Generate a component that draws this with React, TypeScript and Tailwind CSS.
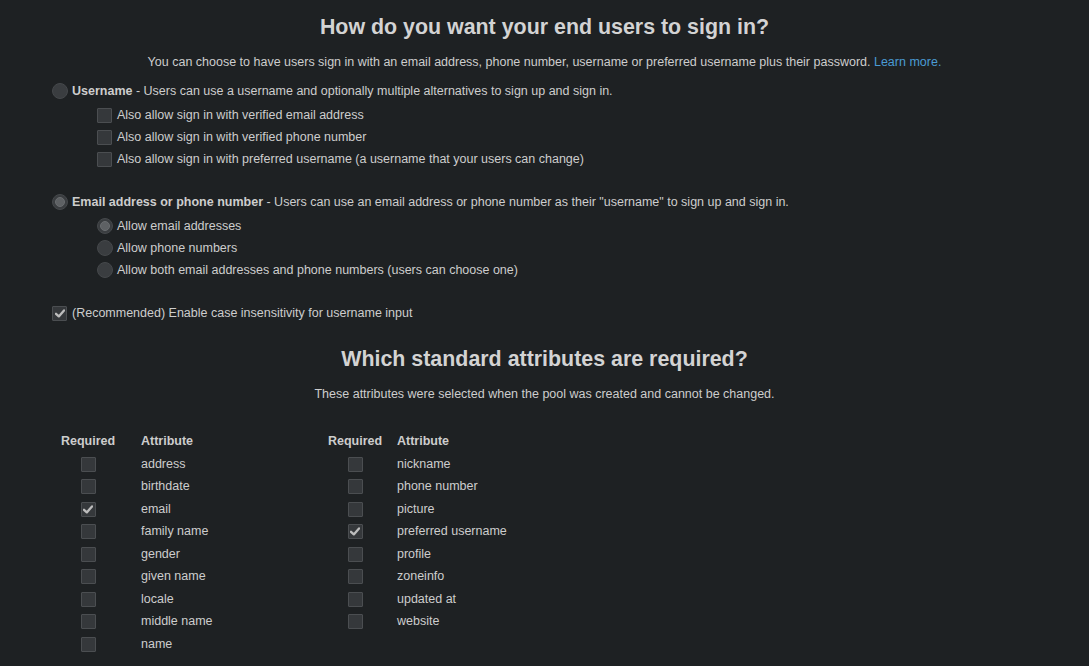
import React from "react";

const Check = () => (
  <svg width="10" height="9" viewBox="0 0 10 9" className="block">
    <path d="M1 4.8 L3.8 7.4 L9 1.4" fill="none" stroke="#bdbdbd" strokeWidth="2.3" strokeLinecap="round" strokeLinejoin="round" />
  </svg>
);

const Box = ({ checked = false }: { checked?: boolean }) => (
  <span className="inline-flex items-center justify-center w-[15px] h-[15px] shrink-0 bg-[#35383b] border border-[#4b4e51] rounded-[1px]">
    {checked ? <Check /> : null}
  </span>
);

const Radio = ({ checked = false }: { checked?: boolean }) => (
  <span className="inline-flex items-center justify-center w-[16px] h-[16px] shrink-0 rounded-full bg-[#3a3d40] border border-[#45484b]">
    {checked ? <span className="w-[10px] h-[10px] rounded-full bg-[#5e6164] border border-[#6b6e71]" /> : null}
  </span>
);

const left = [
  ["address", false],
  ["birthdate", false],
  ["email", true],
  ["family name", false],
  ["gender", false],
  ["given name", false],
  ["locale", false],
  ["middle name", false],
  ["name", false],
] as const;

const right = [
  ["nickname", false],
  ["phone number", false],
  ["picture", false],
  ["preferred username", true],
  ["profile", false],
  ["zoneinfo", false],
  ["updated at", false],
  ["website", false],
] as const;

function AttrTable({ rows, gap }: { rows: readonly (readonly [string, boolean])[]; gap: string }) {
  return (
    <div className={`grid grid-cols-[54px_auto] ${gap} auto-rows-[22.5px] items-center`}>
      <div className="h-[22px] flex items-center justify-center font-bold">Required</div>
      <div className="h-[22px] flex items-center font-bold">Attribute</div>
      {rows.map(([name, c]) => (
        <React.Fragment key={name}>
          <div className="flex justify-center">
            <Box checked={c} />
          </div>
          <div>{name}</div>
        </React.Fragment>
      ))}
    </div>
  );
}

export default function App() {
  return (
    <div
      className="w-[1089px] h-[666px] overflow-hidden bg-[#1e2123] text-[#cdcdcd] text-[12.5px] pt-[1px]"
      style={{ fontFamily: '"Liberation Sans", Arial, sans-serif' }}
    >
      <h1 className="mt-[12px] h-[28px] leading-[28px] text-center text-[21.4px] font-bold text-[#d3d3d3]">
        How do you want your end users to sign in?
      </h1>
      <p className="mt-[10px] h-[22px] leading-[22px] text-center">
        You can choose to have users sign in with an email address, phone number, username or preferred username plus their password.{" "}
        <span className="text-[#4a9bd4]">Learn more.</span>
      </p>

      <div className="pl-[52px]">
        <div className="mt-[7px] h-[22px] flex items-center gap-[4px]">
          <Radio />
          <span>
            <b>Username</b> - Users can use a username and optionally multiple alternatives to sign up and sign in.
          </span>
        </div>
        <div className="mt-[2px] pl-[45px] flex flex-col">
          {[
            "Also allow sign in with verified email address",
            "Also allow sign in with verified phone number",
            "Also allow sign in with preferred username (a username that your users can change)",
          ].map((t) => (
            <div key={t} className="h-[22px] flex items-center gap-[5px]">
              <Box />
              <span>{t}</span>
            </div>
          ))}
        </div>

        <div className="mt-[21px] h-[22px] flex items-center gap-[4px]">
          <Radio checked />
          <span>
            <b>Email address or phone number</b> - Users can use an email address or phone number as their "username" to sign up and sign in.
          </span>
        </div>
        <div className="mt-[2px] pl-[45px] flex flex-col">
          {[
            ["Allow email addresses", true],
            ["Allow phone numbers", false],
            ["Allow both email addresses and phone numbers (users can choose one)", false],
          ].map(([t, c]) => (
            <div key={t as string} className="h-[22px] flex items-center gap-[4px]">
              <Radio checked={c as boolean} />
              <span>{t}</span>
            </div>
          ))}
        </div>

        <div className="mt-[21px] h-[22px] flex items-center gap-[5px]">
          <Box checked />
          <span>(Recommended) Enable case insensitivity for username input</span>
        </div>
      </div>

      <h2 className="mt-[21px] h-[28px] leading-[28px] text-center text-[21.4px] font-bold text-[#d3d3d3]">
        Which standard attributes are required?
      </h2>
      <p className="mt-[10px] h-[22px] leading-[22px] text-center">
        These attributes were selected when the pool was created and cannot be changed.
      </p>

      <div className="mt-[25.5px] flex">
        <div className="ml-[61px] w-[267px]">
          <AttrTable rows={left} gap="gap-x-[26px]" />
        </div>
        <div>
          <AttrTable rows={right} gap="gap-x-[15px]" />
        </div>
      </div>
    </div>
  );
}
